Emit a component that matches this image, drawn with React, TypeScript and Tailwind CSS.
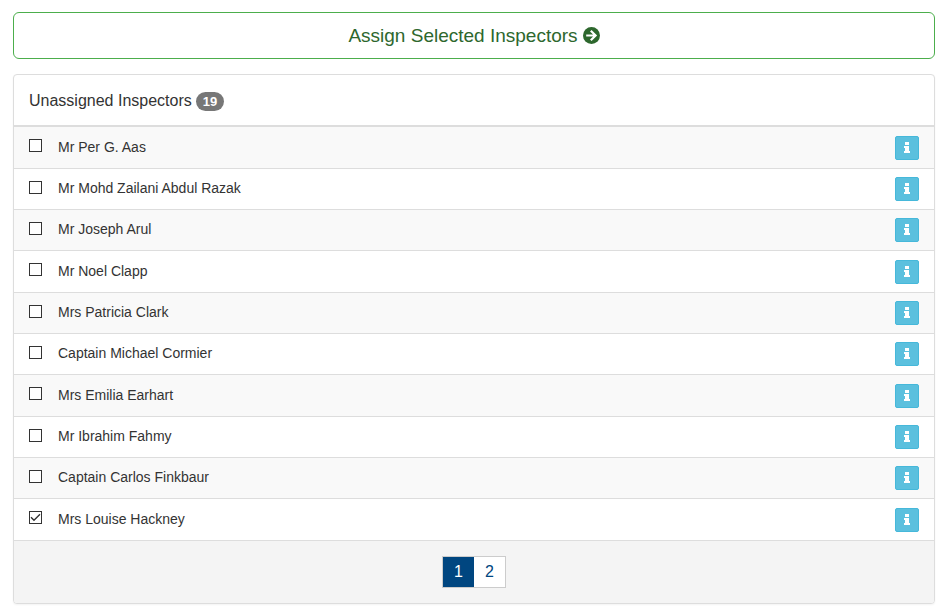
import React, { useState } from 'react';

interface Inspector {
  id: number;
  name: string;
}

const TOTAL_UNASSIGNED = 19;

const inspectors: Inspector[] = [
  { id: 1, name: 'Mr Per G. Aas' },
  { id: 2, name: 'Mr Mohd Zailani Abdul Razak' },
  { id: 3, name: 'Mr Joseph Arul' },
  { id: 4, name: 'Mr Noel Clapp' },
  { id: 5, name: 'Mrs Patricia Clark' },
  { id: 6, name: 'Captain Michael Cormier' },
  { id: 7, name: 'Mrs Emilia Earhart' },
  { id: 8, name: 'Mr Ibrahim Fahmy' },
  { id: 9, name: 'Captain Carlos Finkbaur' },
  { id: 10, name: 'Mrs Louise Hackney' },
];

const ArrowCircleIcon: React.FC = () => (
  <svg width="17" height="17" viewBox="0 0 17 17" aria-hidden="true">
    <circle cx="8.5" cy="8.5" r="8.5" fill="currentColor" />
    <path d="M3.2 8.5H12M7.8 3.7L12.6 8.5L7.8 13.3" fill="none" stroke="#fff" strokeWidth="2.2" />
  </svg>
);

const InfoIcon: React.FC = () => (
  <svg width="6" height="11" viewBox="0 0 6 11" fill="currentColor" aria-hidden="true">
    <path d="M1 0h4v3H1zM0 4h5v5h1v2H0V9h1V6H0z" />
  </svg>
);

interface InspectorRowProps {
  inspector: Inspector;
  checked: boolean;
  onToggle: (id: number) => void;
}

const InspectorRow: React.FC<InspectorRowProps> = ({ inspector, checked, onToggle }) => {
  const inputId = `inspector-${inspector.id}`;

  return (
    <tr className="h-[41px] odd:bg-[#f9f9f9] nth-[3n+1]:h-[42px]">
      <td className="w-11 border-b border-[#ddd] pl-[15px] align-middle">
        <span className="mb-1 grid size-[13px]">
          <input
            id={inputId}
            type="checkbox"
            checked={checked}
            onChange={() => onToggle(inspector.id)}
            className="peer col-start-1 row-start-1 size-[13px] appearance-none border border-[#333] bg-white"
          />
          <svg
            viewBox="0 0 13 13"
            fill="none"
            stroke="#333"
            strokeWidth="1.4"
            className="pointer-events-none invisible col-start-1 row-start-1 size-[13px] peer-checked:visible"
            aria-hidden="true"
          >
            <path d="M2 6.2L5 9.2L11 3.2" />
          </svg>
        </span>
      </td>
      <td className="border-b border-[#ddd] align-middle">
        <label htmlFor={inputId} className="block pb-0.5 text-sm leading-5">
          {inspector.name}
        </label>
      </td>
      <td className="w-[39px] border-b border-[#ddd] pr-[15px] align-middle">
        <button
          type="button"
          aria-label={`Details for ${inspector.name}`}
          className="flex size-6 items-center justify-center rounded-xs border border-[#46b8da] bg-[#5bc0de] pb-px text-white"
        >
          <InfoIcon />
        </button>
      </td>
    </tr>
  );
};

const App: React.FC = () => {
  const [selected, setSelected] = useState<number[]>([10]);

  const toggle = (id: number) => {
    setSelected((prev) => (prev.includes(id) ? prev.filter((item) => item !== id) : [...prev, id]));
  };

  return (
    <div className="bg-white pt-3 pr-2 pb-3 pl-[13px] font-['Liberation_Sans',Arial,sans-serif] text-[#333]">
      <button
        type="button"
        className="mb-[15px] flex w-full items-center justify-center gap-[5px] rounded-md border border-[#4cae4c] bg-white py-[10px] text-[19px] leading-[25px] text-[#2d672d]"
      >
        Assign Selected Inspectors
        <ArrowCircleIcon />
      </button>

      <section className="overflow-hidden rounded-sm border border-[#ddd] bg-white shadow-xs">
        <header className="flex items-center gap-1 border-b-2 border-[#ddd] px-[15px] pt-4 pb-[14px]">
          <h2 className="text-base leading-5">Unassigned Inspectors</h2>
          <span className="rounded-full bg-[#777] px-[7px] text-[13px] leading-[19px] font-bold text-white">
            {TOTAL_UNASSIGNED}
          </span>
        </header>

        <table className="w-full border-separate border-spacing-0">
          <tbody>
            {inspectors.map((inspector) => (
              <InspectorRow
                key={inspector.id}
                inspector={inspector}
                checked={selected.includes(inspector.id)}
                onToggle={toggle}
              />
            ))}
          </tbody>
        </table>

        <footer className="bg-[#f4f4f4] py-[15px]">
          <nav aria-label="Pages" className="flex justify-center">
            <a
              href="#page-1"
              aria-current="page"
              className="flex h-8 w-8 items-center justify-center border border-r-0 border-[#ccc] bg-[#004680] text-base text-white"
            >
              1
            </a>
            <a
              href="#page-2"
              className="flex h-8 w-8 items-center justify-center border border-l-0 border-[#ccc] bg-white text-base text-[#004680]"
            >
              2
            </a>
          </nav>
        </footer>
      </section>
    </div>
  );
};

export default App;
